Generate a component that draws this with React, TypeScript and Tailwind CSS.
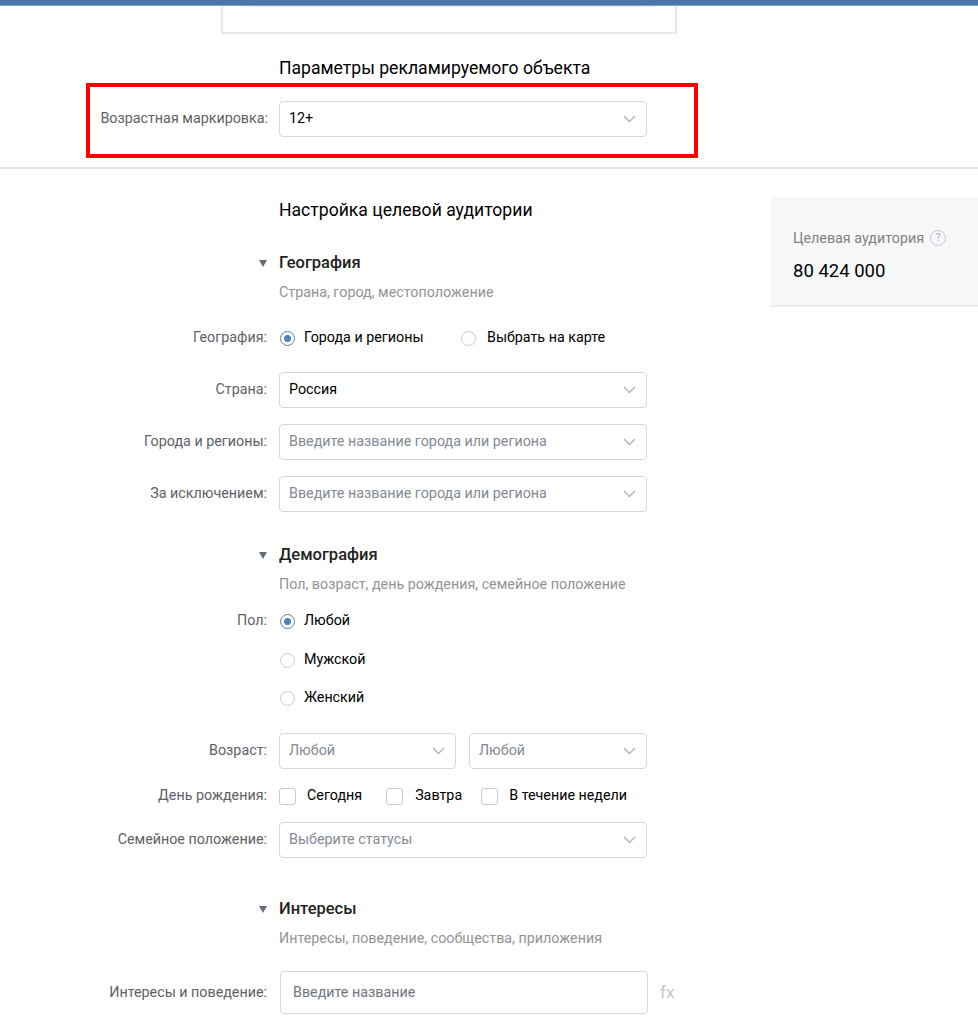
const font = "font-[family-name:Roboto,'Liberation_Sans',sans-serif]";

function Chevron() {
  return (
    <svg width="13" height="8" viewBox="0 0 13 8" className="shrink-0">
      <polyline points="1,1 6.5,6.5 12,1" fill="none" stroke="#aab4bf" strokeWidth="1.3" />
    </svg>
  );
}

function Select({ value, placeholder, className }: { value?: string; placeholder?: string; className: string }) {
  return (
    <div
      className={
        "flex h-[36px] items-center justify-between rounded-[4px] border border-[#d3d9de] bg-white pl-[9px] pr-[10px] " +
        className
      }
    >
      {value ? (
        <span className="text-[14.3px] text-black">{value}</span>
      ) : (
        <span className="text-[14.3px] text-[#828a94]">{placeholder}</span>
      )}
      <Chevron />
    </div>
  );
}

function Label({ children }: { children?: React.ReactNode }) {
  return <div className="w-[267px] shrink-0 text-right text-[14.3px] text-[#5e6168]">{children}</div>;
}

function Radio({ checked }: { checked?: boolean }) {
  return checked ? (
    <span className="flex h-[15px] w-[15px] shrink-0 items-center justify-center rounded-full border border-[#5181b8]">
      <span className="h-[7px] w-[7px] rounded-full bg-[#5181b8]" />
    </span>
  ) : (
    <span className="block h-[15px] w-[15px] shrink-0 rounded-full border border-[#c5ccd4]" />
  );
}

function Checkbox({ className }: { className: string }) {
  return <span className={"block h-[17px] w-[17px] shrink-0 rounded-[3px] border border-[#c5ccd4] " + className} />;
}

function SectionHeader({ title, sub }: { title: string; sub: string }) {
  return (
    <>
      <div className="flex h-[20px] items-center">
        <div className="flex w-[267px] justify-end">
          <svg width="8" height="7" viewBox="0 0 8 7">
            <polygon points="0,0 8,0 4,7" fill="#626d7a" />
          </svg>
        </div>
        <div className="ml-[12px] text-[16.5px] font-medium text-[#222]">{title}</div>
      </div>
      <div className="mt-[11px] pl-[279px] text-[14.3px] leading-[16px] text-[#939393]">{sub}</div>
    </>
  );
}

function Row({ label, children, className }: { label?: string; children: React.ReactNode; className: string }) {
  return (
    <div className={"flex items-center " + className}>
      <Label>{label}</Label>
      <div className="ml-[12px] flex items-center">{children}</div>
    </div>
  );
}

function Option({ checked, text }: { checked?: boolean; text: string }) {
  return (
    <div className="flex items-center gap-[9px] pl-px">
      <Radio checked={checked} />
      <span className="text-[14.3px] text-black">{text}</span>
    </div>
  );
}

export default function App() {
  return (
    <div className={"min-h-[1029px] w-full overflow-hidden bg-white " + font}>
      <div className="h-[5px] bg-[#4a76a8]" />
      <div className="h-px bg-[#86a3c6]" />
      <div className="ml-[221px] h-[28px] w-[456px] border-x-2 border-b-2 border-[#e4e8ed]">
        <div className="mx-[20px] h-px bg-[#eceef1]" />
      </div>

      <h2 className="ml-[279px] mt-[23px] text-[17.6px] leading-[22px] text-black">Параметры рекламируемого объекта</h2>

      <div className="ml-[86px] mt-[4px] h-[75px] w-[612px] border-4 border-[#ff0000] pt-[14px]">
        <div className="flex items-center">
          <div className="w-[178px] shrink-0 text-right text-[14.3px] text-[#5e6168]">Возрастная маркировка:</div>
          <Select value="12+" className="ml-[11px] w-[368px]" />
        </div>
      </div>

      <div className="mt-[9px] h-[2px] bg-[#e7e8ec]" />

      <div className="flex">
        <div className="w-[771px] shrink-0">
          <h2 className="ml-[279px] mt-[30px] text-[17.6px] leading-[22px] text-black">Настройка целевой аудитории</h2>

          <div className="mt-[32px]">
            <SectionHeader title="География" sub="Страна, город, местоположение" />
          </div>

          <Row label="География:" className="mt-[28px] h-[20px]">
            <div className="w-[182px]">
              <Option checked text="Города и регионы" />
            </div>
            <div className="flex items-center gap-[11px]">
              <Radio />
              <span className="text-[14.3px] text-black">Выбрать на карте</span>
            </div>
          </Row>

          <Row label="Страна:" className="mt-[24px]">
            <Select value="Россия" className="w-[368px]" />
          </Row>
          <Row label="Города и регионы:" className="mt-[16px]">
            <Select placeholder="Введите название города или региона" className="w-[368px]" />
          </Row>
          <Row label="За исключением:" className="mt-[16px]">
            <Select placeholder="Введите название города или региона" className="w-[368px]" />
          </Row>

          <div className="mt-[33px]">
            <SectionHeader title="Демография" sub="Пол, возраст, день рождения, семейное положение" />
          </div>

          <Row label="Пол:" className="mt-[19px] h-[20px]">
            <Option checked text="Любой" />
          </Row>
          <Row className="mt-[19px] h-[20px]">
            <Option text="Мужской" />
          </Row>
          <Row className="mt-[18px] h-[20px]">
            <Option text="Женский" />
          </Row>

          <Row label="Возраст:" className="mt-[25px]">
            <Select placeholder="Любой" className="w-[177px]" />
            <Select placeholder="Любой" className="ml-[13px] w-[178px]" />
          </Row>

          <Row label="День рождения:" className="mt-[17px] h-[20px]">
            <Checkbox className="" />
            <span className="ml-[11px] text-[14.3px] text-black">Сегодня</span>
            <Checkbox className="ml-[24px]" />
            <span className="ml-[12px] text-[14.3px] text-black">Завтра</span>
            <Checkbox className="ml-[19px]" />
            <span className="ml-[11px] text-[14.3px] text-black">В течение недели</span>
          </Row>

          <Row label="Семейное положение:" className="mt-[16px]">
            <Select placeholder="Выберите статусы" className="w-[368px]" />
          </Row>

          <div className="mt-[41px]">
            <SectionHeader title="Интересы" sub="Интересы, поведение, сообщества, приложения" />
          </div>

          <Row label="Интересы и поведение:" className="mt-[25px]">
            <div className="ml-px flex h-[43px] w-[368px] items-center rounded-[4px] border border-[#d3d9de] pl-[12px] text-[14.3px] text-[#6f7680]">
              Введите название
            </div>
            <span className="ml-[12px] text-[17px] text-[#c2c8cf]">fx</span>
          </Row>
        </div>

        <div className="mt-[28px] h-[110px] flex-1 border-b-2 border-[#e8eaed] bg-[#f7f8fa] pl-[22px] pt-[33px]">
          <div className="flex items-center gap-[6px] text-[14.3px] leading-[16px] text-[#828282]">
            Целевая аудитория
            <span className="flex h-[16px] w-[16px] items-center justify-center rounded-full border border-[#c5ccd4] text-[10px] text-[#a0a8b2]">
              ?
            </span>
          </div>
          <div className="mt-[13px] text-[18.5px] leading-[24px] text-black">80 424 000</div>
        </div>
      </div>
    </div>
  );
}
